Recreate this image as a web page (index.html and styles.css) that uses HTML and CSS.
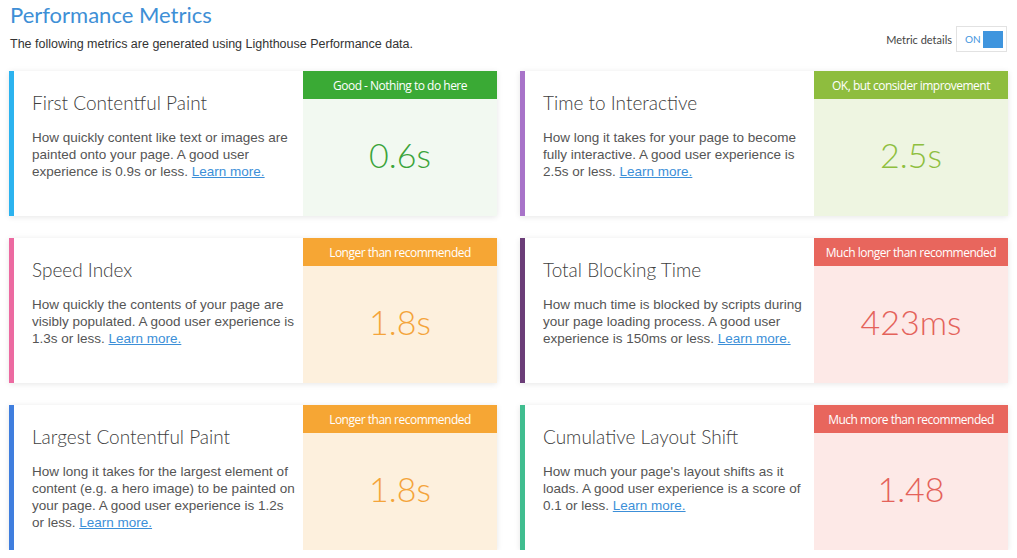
FILE: index.html
```html
<!DOCTYPE html>
<html>
<head>
<meta charset="utf-8">
<link rel="stylesheet" href="styles.css">
</head>
<body>
<div class="page">
  <header class="header">
    <div class="intro">
      <h1 class="title">Performance Metrics</h1>
      <p class="subtitle">The following metrics are generated using Lighthouse Performance data.</p>
    </div>
    <div class="toggle-wrap">
      <span class="toggle-label">Metric details</span>
      <span class="toggle"><span class="toggle-on">ON</span><span class="toggle-knob"></span></span>
    </div>
  </header>

  <div class="grid">
    <div class="card c-fcp good">
      <div class="main">
        <h2 class="name">First Contentful Paint</h2>
        <p class="desc">How quickly content like text or images are painted onto your page. A good user experience is 0.9s or less. <a href="#">Learn more.</a></p>
      </div>
      <div class="panel">
        <div class="badge">Good - Nothing to do here</div>
        <div class="value">0.6s</div>
      </div>
    </div>

    <div class="card c-tti ok">
      <div class="main">
        <h2 class="name">Time to Interactive</h2>
        <p class="desc">How long it takes for your page to become fully interactive. A good user experience is 2.5s or less. <a href="#">Learn more.</a></p>
      </div>
      <div class="panel">
        <div class="badge">OK, but consider improvement</div>
        <div class="value">2.5s</div>
      </div>
    </div>

    <div class="card c-si warn">
      <div class="main">
        <h2 class="name">Speed Index</h2>
        <p class="desc">How quickly the contents of your page are visibly populated. A good user experience is 1.3s or less. <a href="#">Learn more.</a></p>
      </div>
      <div class="panel">
        <div class="badge">Longer than recommended</div>
        <div class="value">1.8s</div>
      </div>
    </div>

    <div class="card c-tbt bad">
      <div class="main">
        <h2 class="name">Total Blocking Time</h2>
        <p class="desc">How much time is blocked by scripts during your page loading process. A good user experience is 150ms or less. <a href="#">Learn more.</a></p>
      </div>
      <div class="panel">
        <div class="badge">Much longer than recommended</div>
        <div class="value">423ms</div>
      </div>
    </div>

    <div class="card c-lcp warn">
      <div class="main">
        <h2 class="name">Largest Contentful Paint</h2>
        <p class="desc">How long it takes for the largest element of content (e.g. a hero image) to be painted on your page. A good user experience is 1.2s or less. <a href="#">Learn more.</a></p>
      </div>
      <div class="panel">
        <div class="badge">Longer than recommended</div>
        <div class="value">1.8s</div>
      </div>
    </div>

    <div class="card c-cls bad">
      <div class="main">
        <h2 class="name">Cumulative Layout Shift</h2>
        <p class="desc">How much your page's layout shifts as it loads. A good user experience is a score of 0.1 or less. <a href="#">Learn more.</a></p>
      </div>
      <div class="panel">
        <div class="badge">Much more than recommended</div>
        <div class="value">1.48</div>
      </div>
    </div>
  </div>
</div>
</body>
</html>
```

FILE: styles.css
```css
* { box-sizing: border-box; }

body {
  margin: 0;
  background: #ffffff;
  font-family: "Liberation Sans", Arial, sans-serif;
  color: #555;
}

.page {
  width: 1017px;
  padding: 0 9px;
}

.header {
  display: flex;
  justify-content: space-between;
  align-items: flex-start;
  height: 52px;
}

.intro { padding-left: 1px; }

.title {
  margin: 0;
  font-family: Lato, "Noto Sans", sans-serif;
  font-weight: 400;
  font-size: 22px;
  line-height: 30px;
  color: #3e8fd6;
}

.subtitle {
  margin: 6px 0 0;
  font-size: 12.5px;
  line-height: 16px;
  color: #333;
}

.toggle-wrap {
  display: flex;
  align-items: center;
  margin-top: 26px;
  margin-right: 1px;
}

.toggle-label {
  font-family: Lato, "Noto Sans", sans-serif;
  font-size: 11px;
  color: #444;
  margin-right: 4px;
}

.toggle {
  display: flex;
  align-items: center;
  width: 51px;
  height: 26px;
  border: 1px solid #e2e2e2;
  padding: 0 3px 0 8px;
}

.toggle-on {
  font-family: Lato, "Noto Sans", sans-serif;
  font-size: 10px;
  color: #3f95de;
  flex: 1;
}

.toggle-knob {
  width: 20px;
  height: 17px;
  background: #3f95de;
}

.grid {
  margin-top: 19px;
  display: grid;
  grid-template-columns: 488px 488px;
  column-gap: 23px;
  row-gap: 22px;
}

.card {
  display: flex;
  height: 145px;
  background: #fff;
  border-left: 5px solid #2cb3ef;
  box-shadow: 0 1px 6px rgba(0, 0, 0, 0.10);
}

.main {
  flex: 1;
  padding: 20px 6px 0 18px;
}

.name {
  margin: 0;
  font-family: Lato, "Noto Sans", sans-serif;
  font-weight: 300;
  font-size: 19px;
  line-height: 24px;
  color: #404040;
}

.desc {
  margin: 14px 0 0;
  font-size: 13.5px;
  line-height: 17px;
  color: #555;
}

.desc a {
  color: #3c8fd8;
  text-decoration: underline;
}

.panel {
  width: 194px;
  display: flex;
  flex-direction: column;
}

.badge {
  height: 28px;
  display: flex;
  align-items: center;
  justify-content: center;
  color: #fff;
  font-family: "Open Sans", "Noto Sans", sans-serif;
  font-size: 12px;
  letter-spacing: -0.5px;
}

.value {
  flex: 1;
  display: flex;
  align-items: center;
  justify-content: center;
  padding-bottom: 6px;
  font-family: Lato, "Noto Sans", sans-serif;
  font-weight: 300;
  font-size: 34px;
}

.good .panel { background: #f2f9f1; }
.good .badge { background: #3aaa35; }
.good .value { color: #3ba43a; }

.ok .panel { background: #eef5e1; }
.ok .badge { background: #8ebd3e; }
.ok .value { color: #8ebf3f; }

.warn .panel { background: #fdf0dd; }
.warn .badge { background: #f6a634; }
.warn .value { color: #f4a43a; }

.bad .panel { background: #fde9e7; }
.bad .badge { background: #e8665d; }
.bad .value { color: #e4625a; }

.c-fcp { border-left-color: #2cb3ef; }
.c-tti { border-left-color: #a873c9; }
.c-si  { border-left-color: #ec6aa1; }
.c-tbt { border-left-color: #6b3d78; }
.c-lcp { border-left-color: #3f7ede; }
.c-cls { border-left-color: #40bd8f; }
```
